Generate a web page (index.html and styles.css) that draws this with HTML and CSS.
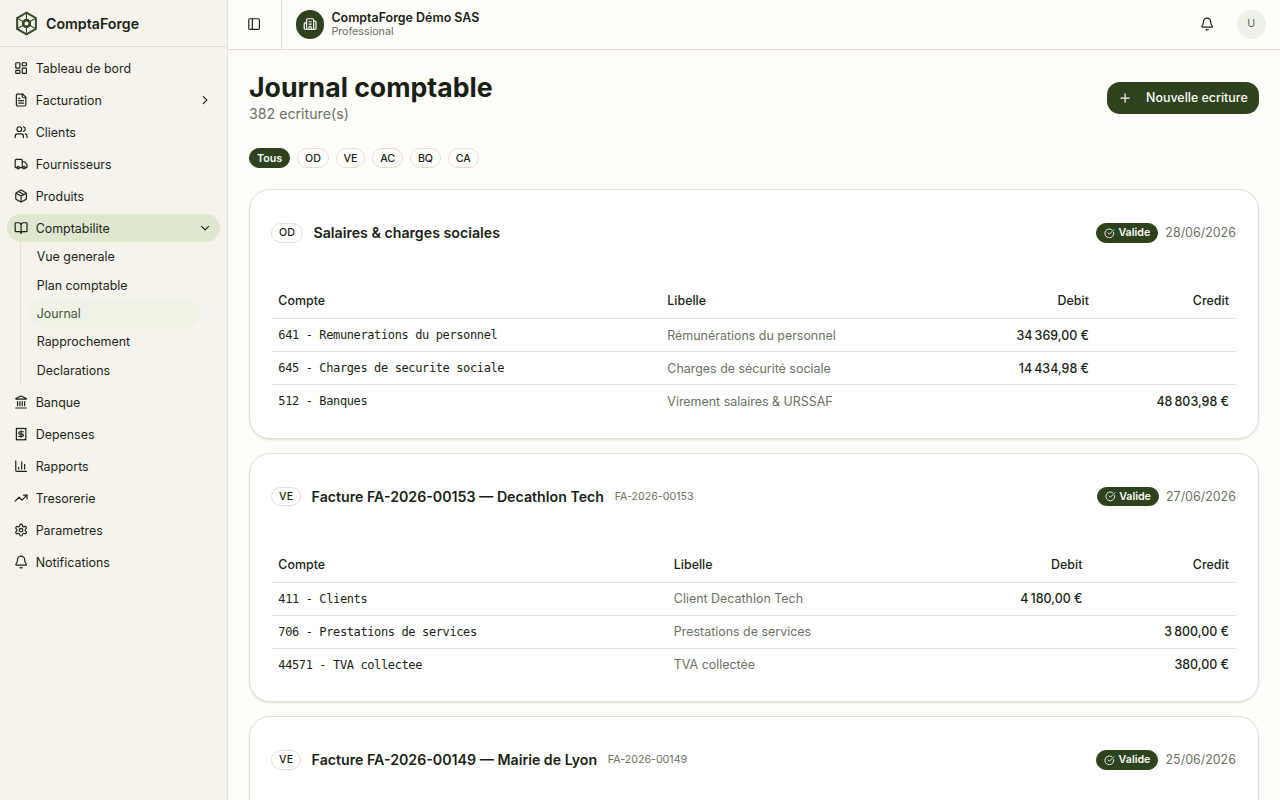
FILE: index.html
```html
<!DOCTYPE html>
<html lang="fr">

<head>
  <meta charset="UTF-8">
  <meta name="viewport" content="width=device-width, initial-scale=1.0">
  <title>ComptaForge</title>
  <link rel="stylesheet" href="styles.css">
</head>

<body>
  <div class="layout">
    <aside class="sidebar">
      <div class="brand">
        <svg class="brand-logo" viewBox="0 0 24 24">
          <path d="M12 1.600 21 6.800v10.400L12 22.400 3 17.200V6.800z" stroke-width="1.900" />
          <path d="M12 2v6M12 16v6M4 7.400l5 2.900M15 13.700l5 2.900M20 7.400l-5 2.900M9 13.700l-5 2.900" stroke-width="1" />
          <circle cx="12" cy="12" r="3.200" stroke-width="2.600" />
        </svg>
        <span>ComptaForge</span>
      </div>
      <nav class="menu">
        <a class="menu-item">
          <svg class="icon" viewBox="0 0 24 24"><rect width="7" height="9" x="3" y="3" rx="1" /><rect width="7" height="5" x="14" y="3" rx="1" /><rect width="7" height="9" x="14" y="12" rx="1" /><rect width="7" height="5" x="3" y="16" rx="1" /></svg>
          <span>Tableau de bord</span>
        </a>
        <a class="menu-item">
          <svg class="icon" viewBox="0 0 24 24"><path d="M15 2H6a2 2 0 0 0-2 2v16a2 2 0 0 0 2 2h12a2 2 0 0 0 2-2V7Z" /><path d="M14 2v4a2 2 0 0 0 2 2h4M10 9H8M16 13H8M16 17H8" /></svg>
          <span>Facturation</span>
          <svg class="icon chevron" viewBox="0 0 24 24"><path d="m9 18 6-6-6-6" /></svg>
        </a>
        <a class="menu-item">
          <svg class="icon" viewBox="0 0 24 24"><path d="M16 21v-2a4 4 0 0 0-4-4H6a4 4 0 0 0-4 4v2" /><circle cx="9" cy="7" r="4" /><path d="M22 21v-2a4 4 0 0 0-3-3.870M16 3.130a4 4 0 0 1 0 7.750" /></svg>
          <span>Clients</span>
        </a>
        <a class="menu-item">
          <svg class="icon" viewBox="0 0 24 24"><path d="M14 18V6a2 2 0 0 0-2-2H4a2 2 0 0 0-2 2v11a1 1 0 0 0 1 1h2M15 18H9M19 18h2a1 1 0 0 0 1-1v-3.650a1 1 0 0 0-.22-.624l-3.480-4.350A1 1 0 0 0 17.520 8H14" /><circle cx="17" cy="18" r="2" /><circle cx="7" cy="18" r="2" /></svg>
          <span>Fournisseurs</span>
        </a>
        <a class="menu-item">
          <svg class="icon" viewBox="0 0 24 24"><path d="M11 21.730a2 2 0 0 0 2 0l7-4A2 2 0 0 0 21 16V8a2 2 0 0 0-1-1.730l-7-4a2 2 0 0 0-2 0l-7 4A2 2 0 0 0 3 8v8a2 2 0 0 0 1 1.730zM12 22V12M3.300 7 12 12l8.700-5M7.500 4.270l9 5.150" /></svg>
          <span>Produits</span>
        </a>
        <a class="menu-item active">
          <svg class="icon" viewBox="0 0 24 24"><path d="M12 7v14M3 18a1 1 0 0 1-1-1V4a1 1 0 0 1 1-1h5a4 4 0 0 1 4 4 4 4 0 0 1 4-4h5a1 1 0 0 1 1 1v13a1 1 0 0 1-1 1h-6a3 3 0 0 0-3 3 3 3 0 0 0-3-3z" /></svg>
          <span>Comptabilite</span>
          <svg class="icon chevron" viewBox="0 0 24 24"><path d="m6 9 6 6 6-6" /></svg>
        </a>
        <div class="submenu">
          <a class="submenu-item">Vue generale</a>
          <a class="submenu-item">Plan comptable</a>
          <a class="submenu-item current">Journal</a>
          <a class="submenu-item">Rapprochement</a>
          <a class="submenu-item">Declarations</a>
        </div>
        <a class="menu-item">
          <svg class="icon" viewBox="0 0 24 24"><path d="M10 18v-7M11.120 2.198a2 2 0 0 1 1.760.006l7.866 3.847c.476.233.31.949-.22.949H3.474c-.53 0-.695-.716-.22-.949zM14 18v-7M18 18v-7M3 22h18M6 18v-7" /></svg>
          <span>Banque</span>
        </a>
        <a class="menu-item">
          <svg class="icon" viewBox="0 0 24 24"><path d="M4 2v20l2-1 2 1 2-1 2 1 2-1 2 1 2-1 2 1V2l-2 1-2-1-2 1-2-1-2 1-2-1-2 1Z" /><path d="M16 8h-6a2 2 0 1 0 0 4h4a2 2 0 1 1 0 4H8M12 17.500v-11" /></svg>
          <span>Depenses</span>
        </a>
        <a class="menu-item">
          <svg class="icon" viewBox="0 0 24 24"><path d="M3 3v16a2 2 0 0 0 2 2h16M18 17V9M13 17V5M8 17v-3" /></svg>
          <span>Rapports</span>
        </a>
        <a class="menu-item">
          <svg class="icon" viewBox="0 0 24 24"><path d="M16 7h6v6" /><path d="m22 7-8.500 8.500-5-5L2 17" /></svg>
          <span>Tresorerie</span>
        </a>
        <a class="menu-item">
          <svg class="icon" viewBox="0 0 24 24"><path d="M12.220 2h-.44a2 2 0 0 0-2 2v.18a2 2 0 0 1-1 1.730l-.43.25a2 2 0 0 1-2 0l-.15-.08a2 2 0 0 0-2.730.73l-.22.38a2 2 0 0 0 .73 2.730l.15.1a2 2 0 0 1 1 1.720v.51a2 2 0 0 1-1 1.740l-.15.09a2 2 0 0 0-.73 2.730l.22.38a2 2 0 0 0 2.730.73l.15-.08a2 2 0 0 1 2 0l.43.25a2 2 0 0 1 1 1.730V20a2 2 0 0 0 2 2h.44a2 2 0 0 0 2-2v-.18a2 2 0 0 1 1-1.730l.43-.25a2 2 0 0 1 2 0l.15.08a2 2 0 0 0 2.730-.73l.22-.39a2 2 0 0 0-.73-2.730l-.15-.08a2 2 0 0 1-1-1.740v-.5a2 2 0 0 1 1-1.740l.15-.09a2 2 0 0 0 .73-2.730l-.22-.38a2 2 0 0 0-2.730-.73l-.15.08a2 2 0 0 1-2 0l-.43-.25a2 2 0 0 1-1-1.730V4a2 2 0 0 0-2-2z" /><circle cx="12" cy="12" r="3" /></svg>
          <span>Parametres</span>
        </a>
        <a class="menu-item">
          <svg class="icon" viewBox="0 0 24 24"><path d="M10.268 21a2 2 0 0 0 3.464 0M3.262 15.326A1 1 0 0 0 4 17h16a1 1 0 0 0 .74-1.673C19.410 13.956 18 12.499 18 8A6 6 0 0 0 6 8c0 4.499-1.411 5.956-2.738 7.326" /></svg>
          <span>Notifications</span>
        </a>
      </nav>
    </aside>

    <div class="content">
      <header class="topbar">
        <div class="toggle">
          <svg class="icon" viewBox="0 0 24 24"><rect width="18" height="18" x="3" y="3" rx="2" /><path d="M9 3v18" /></svg>
        </div>
        <div class="company">
          <div class="company-logo">
            <svg class="icon" viewBox="0 0 24 24"><path d="M10 12h4M10 8h4M14 21v-3a2 2 0 0 0-4 0v3M6 10H4a2 2 0 0 0-2 2v7a2 2 0 0 0 2 2h16a2 2 0 0 0 2-2V9a2 2 0 0 0-2-2h-2M6 21V5a2 2 0 0 1 2-2h8a2 2 0 0 1 2 2v16" /></svg>
          </div>
          <div>
            <div class="company-name">ComptaForge Démo SAS</div>
            <div class="company-plan">Professional</div>
          </div>
        </div>
        <svg class="icon bell" viewBox="0 0 24 24"><path d="M10.268 21a2 2 0 0 0 3.464 0M3.262 15.326A1 1 0 0 0 4 17h16a1 1 0 0 0 .74-1.673C19.410 13.956 18 12.499 18 8A6 6 0 0 0 6 8c0 4.499-1.411 5.956-2.738 7.326" /></svg>
        <div class="avatar">U</div>
      </header>

      <main class="main">
        <div class="page-header">
          <div>
            <h1>Journal comptable</h1>
            <p>382 ecriture(s)</p>
          </div>
          <button class="btn">
            <svg class="icon" viewBox="0 0 24 24"><path d="M5 12h14M12 5v14" /></svg>
            Nouvelle ecriture
          </button>
        </div>

        <div class="filters">
          <span class="badge badge-dark">Tous</span>
          <span class="badge">OD</span>
          <span class="badge">VE</span>
          <span class="badge">AC</span>
          <span class="badge">BQ</span>
          <span class="badge">CA</span>
        </div>

        <section class="card">
          <div class="card-header">
            <span class="badge">OD</span>
            <h2>Salaires &amp; charges sociales</h2>
            <span class="badge badge-dark status"><svg class="icon" viewBox="0 0 24 24"><path d="M21.801 10A10 10 0 1 1 17 3.335" /><path d="m9 11 3 3L22 4" /></svg>Valide</span>
            <span class="date">28/06/2026</span>
          </div>
          <table class="table-od">
            <thead>
              <tr><th class="col-account">Compte</th><th>Libelle</th><th class="col-debit">Debit</th><th class="col-credit">Credit</th></tr>
            </thead>
            <tbody>
              <tr><td class="account">641 - Remunerations du personnel</td><td class="label">Rémunérations du personnel</td><td class="amount">34&#8239;369,00&nbsp;€</td><td class="amount"></td></tr>
              <tr><td class="account">645 - Charges de securite sociale</td><td class="label">Charges de sécurité sociale</td><td class="amount">14&#8239;434,98&nbsp;€</td><td class="amount"></td></tr>
              <tr><td class="account">512 - Banques</td><td class="label">Virement salaires &amp; URSSAF</td><td class="amount"></td><td class="amount">48&#8239;803,98&nbsp;€</td></tr>
            </tbody>
          </table>
        </section>

        <section class="card">
          <div class="card-header">
            <span class="badge">VE</span>
            <h2>Facture FA-2026-00153 — Decathlon Tech</h2>
            <span class="ref">FA-2026-00153</span>
            <span class="badge badge-dark status"><svg class="icon" viewBox="0 0 24 24"><path d="M21.801 10A10 10 0 1 1 17 3.335" /><path d="m9 11 3 3L22 4" /></svg>Valide</span>
            <span class="date">27/06/2026</span>
          </div>
          <table class="table-ve">
            <thead>
              <tr><th class="col-account">Compte</th><th>Libelle</th><th class="col-debit">Debit</th><th class="col-credit">Credit</th></tr>
            </thead>
            <tbody>
              <tr><td class="account">411 - Clients</td><td class="label">Client Decathlon Tech</td><td class="amount">4&#8239;180,00&nbsp;€</td><td class="amount"></td></tr>
              <tr><td class="account">706 - Prestations de services</td><td class="label">Prestations de services</td><td class="amount"></td><td class="amount">3&#8239;800,00&nbsp;€</td></tr>
              <tr><td class="account">44571 - TVA collectee</td><td class="label">TVA collectée</td><td class="amount"></td><td class="amount">380,00&nbsp;€</td></tr>
            </tbody>
          </table>
        </section>

        <section class="card">
          <div class="card-header">
            <span class="badge">VE</span>
            <h2>Facture FA-2026-00149 — Mairie de Lyon</h2>
            <span class="ref">FA-2026-00149</span>
            <span class="badge badge-dark status"><svg class="icon" viewBox="0 0 24 24"><path d="M21.801 10A10 10 0 1 1 17 3.335" /><path d="m9 11 3 3L22 4" /></svg>Valide</span>
            <span class="date">25/06/2026</span>
          </div>
        </section>
      </main>
    </div>
  </div>
</body>

</html>
```
FILE: styles.css
```css
* {
  margin: 0;
  padding: 0;
  box-sizing: border-box;
}

body {
  font-family: Inter, "Liberation Sans", sans-serif;
  font-size: 12.45px;
  color: #1a1f16;
  background: #fefdf9;
}

.layout {
  display: flex;
  height: 100vh;
  overflow: hidden;
}

.icon {
  width: 14.2px;
  height: 14.2px;
  flex-shrink: 0;
  fill: none;
  stroke: currentColor;
  stroke-width: 2;
  stroke-linecap: round;
  stroke-linejoin: round;
}

/* sidebar */
.sidebar {
  width: 228px;
  flex-shrink: 0;
  background: #f6f3ec;
  border-right: 1px solid #e5e2d8;
}

.brand {
  display: flex;
  align-items: center;
  gap: 7px;
  height: 47px;
  padding-left: 14px;
  border-bottom: 1px solid #e0ddd0;
  font-size: 14.2px;
  font-weight: 600;
}

.brand-logo {
  width: 25px;
  height: 25px;
  fill: none;
  stroke: #34482a;
}

.menu {
  display: flex;
  flex-direction: column;
  gap: 3.55px;
  padding: 7px 7.3px;
}

.menu-item {
  display: flex;
  align-items: center;
  gap: 7.1px;
  height: 28.45px;
  padding: 0 7.1px;
  border-radius: 14px;
}

.menu-item.active {
  background: #dfe7cf;
}

.chevron {
  margin-left: auto;
}

.submenu {
  margin: -3.55px 20px 0 12.8px;
  padding-left: 8px;
  border-left: 1px solid #e0ddd0;
}

.submenu-item {
  display: flex;
  align-items: center;
  height: 28.45px;
  padding-left: 7.6px;
  border-radius: 14px;
}

.submenu-item.current {
  color: #45543a;
  background: #f0f2e6;
}

/* top bar */
.content {
  flex: 1;
  min-width: 0;
}

.topbar {
  display: flex;
  align-items: center;
  height: 50px;
  padding-right: 14.5px;
  border-bottom: 1px solid #e0ddd3;
}

.toggle {
  display: flex;
  align-items: center;
  width: 54px;
  height: 100%;
  padding-left: 19px;
  border-right: 1px solid #e0ddd3;
}

.company {
  display: flex;
  align-items: center;
  gap: 7px;
  flex: 1;
  padding-left: 14px;
}

.company-logo {
  display: flex;
  align-items: center;
  justify-content: center;
  width: 28.4px;
  height: 28.4px;
  border-radius: 50%;
  color: #fefdf9;
  background: #2e421e;
}

.company-name {
  font-size: 12.45px;
  font-weight: 600;
  line-height: 14px;
}

.company-plan {
  font-size: 10.7px;
  line-height: 13px;
  color: #6b7163;
}

.bell {
  margin-right: 23px;
}

.avatar {
  width: 28.4px;
  height: 28.4px;
  border-radius: 50%;
  font-size: 10.7px;
  line-height: 28.4px;
  text-align: center;
  color: #59614f;
  background: #eef1e6;
}

/* page */
.main {
  padding: 21px 21.3px 0 21px;
}

.page-header {
  display: flex;
  align-items: center;
  justify-content: space-between;
  margin-bottom: 24px;
}

h1 {
  font-size: 26.67px;
  font-weight: 700;
  line-height: 32px;
}

.page-header p {
  font-size: 14.2px;
  line-height: 21.3px;
  color: #6b7163;
}

.btn {
  display: flex;
  align-items: center;
  gap: 14px;
  height: 32px;
  padding: 0 11px;
  border: none;
  border-radius: 13px;
  font: 500 12.45px Inter, "Liberation Sans", sans-serif;
  color: #fefdf9;
  background: #2e421e;
}

.filters {
  display: flex;
  gap: 7.1px;
  margin-bottom: 21.3px;
}

.badge {
  display: flex;
  align-items: center;
  height: 19.6px;
  padding: 0 6.8px;
  border: 1px solid #e3e0d4;
  border-radius: 10px;
  font-size: 10.67px;
  font-weight: 500;
}

.badge-dark {
  padding: 0 7px;
  border-color: #2e421e;
  font-weight: 600;
  color: #fefdf9;
  background: #2e421e;
}

.badge .icon {
  width: 10.7px;
  height: 10.7px;
  margin-right: 3.55px;
}

/* journal entries */
.card {
  height: 249.8px;
  margin-bottom: 13.7px;
  padding: 21.3px 21.8px 0 21.3px;
  border: 1px solid #e3e0d4;
  border-radius: 21px;
  background: #fff;
  box-shadow: 0 1px 2px rgba(60, 60, 20, 0.15);
}

.card-header {
  display: flex;
  align-items: center;
  height: 42.8px;
  margin-bottom: 28.8px;
}

.card-header h2 {
  margin-left: 10.7px;
  font-size: 14.2px;
  font-weight: 600;
}

.ref {
  margin-left: 10.7px;
  font-size: 10.67px;
  color: #6b7163;
}

.status {
  margin-left: auto;
}

.date {
  margin-left: 7.1px;
  color: #6b7163;
}

table {
  width: 100%;
  table-layout: fixed;
  border-collapse: collapse;
}

th,
td {
  height: 33px;
  padding: 0 7px;
  text-align: left;
  border-bottom: 1px solid #e5e2d8;
}

th {
  height: 35.5px;
  font-weight: 500;
}

tr:last-child td {
  border-bottom: none;
}

.table-od .col-account {
  width: 389px;
}

.table-ve .col-account {
  width: 395.5px;
}

.col-debit,
.col-credit {
  width: 140px;
  text-align: right;
}

.table-ve .col-credit {
  width: 146.5px;
}

.account {
  font-family: "DejaVu Sans Mono", monospace;
  font-size: 12px;
  letter-spacing: -0.38px;
}

.label {
  color: #6b7163;
}

.amount {
  font-weight: 500;
  text-align: right;
}
```
